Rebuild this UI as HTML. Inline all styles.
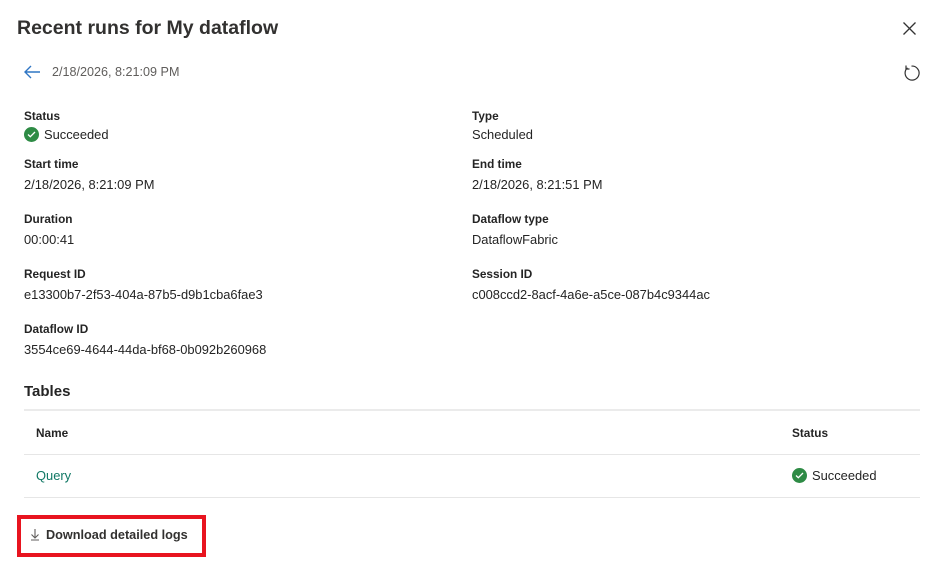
<!DOCTYPE html>
<html><head><meta charset="utf-8"><style>
*{margin:0;padding:0;box-sizing:border-box}
body{width:937px;height:572px;background:#fff;font-family:"Segoe UI","Liberation Sans",sans-serif;color:#242424;position:relative;overflow:hidden}
.a{position:absolute;white-space:nowrap;font-size:12.9px;line-height:16px}
.l{font-weight:bold;font-size:11.8px}
.line{position:absolute;left:24px;width:896px;height:1px;background:#e6e6e6}
.chk{display:inline-block;width:15px;height:15px;border-radius:50%;background:#2e8b45;vertical-align:middle;position:relative;margin-right:5px;top:-1px}
</style></head><body>
<div class="a" style="left:17px;top:15px;font-size:19.5px;line-height:26px;font-weight:bold;color:#323130">Recent runs for My dataflow</div>
<svg style="position:absolute;left:902px;top:21px" width="15" height="15" viewBox="0 0 15 15"><path d="M1.5 1.5L13.5 13.5M13.5 1.5L1.5 13.5" stroke="#333" stroke-width="1.3"/></svg>
<svg style="position:absolute;left:23px;top:64px" width="18" height="16" viewBox="0 0 18 16"><path d="M17 8H2M8 2L2 8l6 6" stroke="#2f76c4" stroke-width="1.4" fill="none"/></svg>
<div class="a" style="left:52px;top:64px;color:#605e5c;font-size:12.6px">2/18/2026, 8:21:09 PM</div>
<svg style="position:absolute;left:902px;top:64px" width="18" height="18" viewBox="0 0 18 18"><path d="M5.5 3.8A7 7 0 1 0 9.5 2.1" stroke="#333" stroke-width="1.2" fill="none"/><path d="M4 1.5v3.5h3.5" stroke="#333" stroke-width="1.2" fill="none"/></svg>

<div class="a l" style="left:24px;top:108px">Status</div>
<div class="a" style="left:24px;top:127px"><span class="chk"><svg style="position:absolute;left:3px;top:4px" width="9" height="7" viewBox="0 0 9 7"><path d="M1 3.5l2.3 2.2L8 1" stroke="#fff" stroke-width="1.3" fill="none"/></svg></span>Succeeded</div>
<div class="a l" style="left:472px;top:108px">Type</div>
<div class="a" style="left:472px;top:127px">Scheduled</div>

<div class="a l" style="left:24px;top:156px">Start time</div>
<div class="a" style="left:24px;top:177px">2/18/2026, 8:21:09 PM</div>
<div class="a l" style="left:472px;top:156px">End time</div>
<div class="a" style="left:472px;top:177px">2/18/2026, 8:21:51 PM</div>

<div class="a l" style="left:24px;top:211px">Duration</div>
<div class="a" style="left:24px;top:232px">00:00:41</div>
<div class="a l" style="left:472px;top:211px">Dataflow type</div>
<div class="a" style="left:472px;top:232px">DataflowFabric</div>

<div class="a l" style="left:24px;top:266px">Request ID</div>
<div class="a" style="left:24px;top:287px">e13300b7-2f53-404a-87b5-d9b1cba6fae3</div>
<div class="a l" style="left:472px;top:266px">Session ID</div>
<div class="a" style="left:472px;top:287px">c008ccd2-8acf-4a6e-a5ce-087b4c9344ac</div>

<div class="a l" style="left:24px;top:321px">Dataflow ID</div>
<div class="a" style="left:24px;top:342px">3554ce69-4644-44da-bf68-0b092b260968</div>

<div class="a" style="left:24px;top:382px;font-size:15px;line-height:20px;font-weight:bold">Tables</div>
<div class="line" style="top:409px;height:2px;background:#ebebeb"></div>
<div class="a l" style="left:36px;top:425px">Name</div>
<div class="a l" style="left:792px;top:425px">Status</div>
<div class="line" style="top:454px"></div>
<div class="a" style="left:36px;top:468px;color:#117865">Query</div>
<div class="a" style="left:792px;top:468px"><span class="chk"><svg style="position:absolute;left:3px;top:4px" width="9" height="7" viewBox="0 0 9 7"><path d="M1 3.5l2.3 2.2L8 1" stroke="#fff" stroke-width="1.3" fill="none"/></svg></span>Succeeded</div>
<div class="line" style="top:497px"></div>

<div style="position:absolute;left:17px;top:515px;width:189px;height:42px;border:4px solid #e8141f"></div>
<svg style="position:absolute;left:30px;top:528px" width="10" height="13" viewBox="0 0 10 13"><path d="M5 1v9M1.5 6.5L5 10l3.5-3.5M1 12h8" stroke="#605e5c" stroke-width="1.1" fill="none"/></svg>
<div class="a" style="left:46px;top:527px;font-size:12.7px;font-weight:bold;color:#323130">Download detailed logs</div>
</body></html>
